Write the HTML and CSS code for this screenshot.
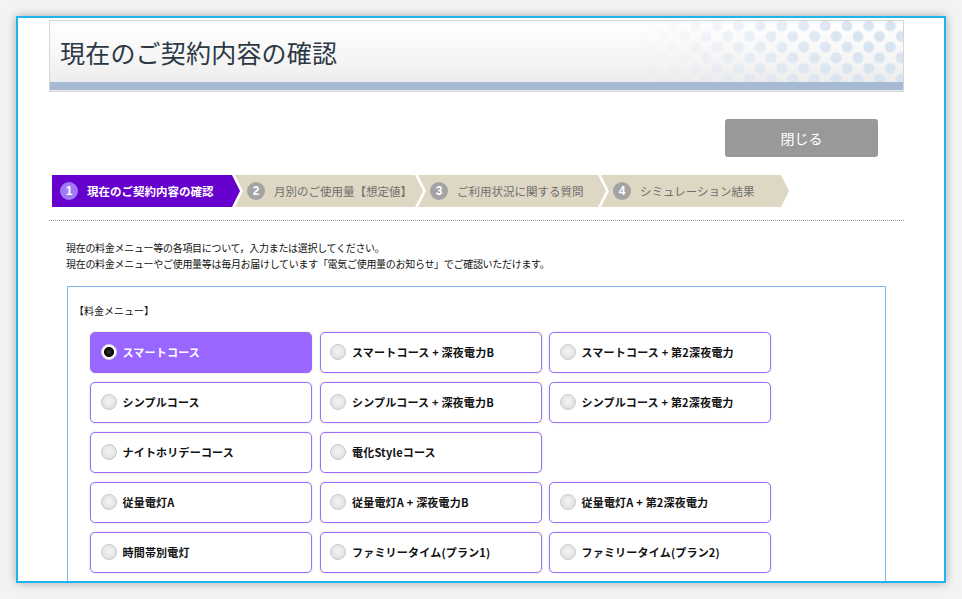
FILE: index.html
```html
<!DOCTYPE html>
<html lang="ja">
<head>
<meta charset="utf-8">
<title>現在のご契約内容の確認</title>
<link rel="stylesheet" href="styles.css">
</head>
<body>
<div class="window">
  <div class="page">
    <div class="header">
      <div class="header-top">
        <h1 class="title">現在のご契約内容の確認</h1>
        <div class="dots"></div>
      </div>
      <div class="header-bar"></div>
    </div>

    <div class="actions">
      <button class="close-btn" type="button">閉じる</button>
    </div>

    <ol class="steps">
      <li class="step step-first step-active"><span class="num">1</span><span class="step-label">現在のご契約内容の確認</span></li>
      <li class="step"><span class="num">2</span><span class="step-label">月別のご使用量【想定値】</span></li>
      <li class="step"><span class="num">3</span><span class="step-label">ご利用状況に関する質問</span></li>
      <li class="step"><span class="num">4</span><span class="step-label">シミュレーション結果</span></li>
    </ol>

    <div class="content">
      <p class="intro">現在の料金メニュー等の各項目について，入力または選択してください。<br>現在の料金メニューやご使用量等は毎月お届けしています「電気ご使用量のお知らせ」でご確認いただけます。</p>

      <div class="panel">
        <div class="panel-label">【料金メニュー】</div>
        <div class="options">
          <label class="option selected"><span class="radio"></span><span class="opt-text">スマートコース</span></label>
          <label class="option"><span class="radio"></span><span class="opt-text">スマートコース + 深夜電力B</span></label>
          <label class="option"><span class="radio"></span><span class="opt-text">スマートコース + 第2深夜電力</span></label>

          <label class="option"><span class="radio"></span><span class="opt-text">シンプルコース</span></label>
          <label class="option"><span class="radio"></span><span class="opt-text">シンプルコース + 深夜電力B</span></label>
          <label class="option"><span class="radio"></span><span class="opt-text">シンプルコース + 第2深夜電力</span></label>

          <label class="option"><span class="radio"></span><span class="opt-text">ナイトホリデーコース</span></label>
          <label class="option"><span class="radio"></span><span class="opt-text">電化Styleコース</span></label>
          <div class="option-empty"></div>

          <label class="option"><span class="radio"></span><span class="opt-text">従量電灯A</span></label>
          <label class="option"><span class="radio"></span><span class="opt-text">従量電灯A + 深夜電力B</span></label>
          <label class="option"><span class="radio"></span><span class="opt-text">従量電灯A + 第2深夜電力</span></label>

          <label class="option"><span class="radio"></span><span class="opt-text">時間帯別電灯</span></label>
          <label class="option"><span class="radio"></span><span class="opt-text">ファミリータイム(プラン1)</span></label>
          <label class="option"><span class="radio"></span><span class="opt-text">ファミリータイム(プラン2)</span></label>
        </div>
      </div>
    </div>
  </div>
</div>
</body>
</html>
```

FILE: styles.css
```css
* { box-sizing: border-box; }

html, body {
  margin: 0;
  padding: 0;
}

body {
  background: #f3f3f3;
  font-family: "Noto Sans CJK JP", "Noto Sans", sans-serif;
  color: #222;
  width: 962px;
  height: 599px;
  overflow: hidden;
}

.window {
  margin: 16px 0 0 16px;
  width: 930px;
  height: 567px;
  border: 2px solid #1db4ef;
  background: #fff;
  overflow: hidden;
  box-shadow: 0 0 9px rgba(0, 0, 0, 0.3);
}

.page {
  margin: 2px 0 0 31px;
  width: 855px;
}

/* Header */
.header {
  height: 72px;
  border: 1px solid #d6d6d6;
  background: linear-gradient(to bottom, #ffffff 0%, #f4f4f4 60%, #e9e9e9 100%);
  display: flex;
  flex-direction: column;
}

.header-top {
  height: 61px;
  display: flex;
  align-items: center;
}

.title {
  flex: 1;
  margin: 2px 0 0 0;
  padding: 0 0 0 10px;
  font-weight: 400;
  font-size: 25px;
  letter-spacing: 0.2px;
  color: #2c3844;
  line-height: 1;
}

.dots {
  width: 262px;
  height: 61px;
  background:
    radial-gradient(circle at 50% 50%, #d9e4f1 5px, rgba(217,228,241,0) 5.8px) 0 -6px / 21.7px 21.4px,
    radial-gradient(circle at 50% 50%, #d9e4f1 5px, rgba(217,228,241,0) 5.8px) 10.85px 4.7px / 21.7px 21.4px;
  -webkit-mask-image: linear-gradient(to right, rgba(0,0,0,0) 0%, rgba(0,0,0,0.35) 30%, rgba(0,0,0,0.8) 60%, #000 85%);
  mask-image: linear-gradient(to right, rgba(0,0,0,0) 0%, rgba(0,0,0,0.35) 30%, rgba(0,0,0,0.8) 60%, #000 85%);
}

.header-bar {
  height: 8px;
  background: #a6bad4;
}

/* Close button */
.actions {
  display: flex;
  justify-content: flex-end;
  padding-right: 26px;
  margin-top: 27px;
}

.close-btn {
  width: 153px;
  height: 38px;
  border: none;
  border-radius: 3px;
  background: #999999;
  color: #fff;
  font-family: "Noto Sans CJK JP", sans-serif;
  font-size: 14px;
  padding: 0;
}

/* Steps */
.steps {
  list-style: none;
  margin: 18px 0 0 3px;
  padding: 0;
  display: flex;
  height: 32px;
}

.step {
  width: 188px;
  height: 32px;
  background: #ddd7c3;
  display: flex;
  align-items: center;
  gap: 9px;
  padding-left: 12px;
  margin-left: -5px;
  clip-path: polygon(0 0, 180px 0, 188px 50%, 180px 100%, 0 100%, 8px 50%);
  color: #6f6f6f;
  font-size: 11.5px;
}

.step-first {
  margin-left: 0;
  padding-left: 8px;
  clip-path: polygon(0 0, 180px 0, 188px 50%, 180px 100%, 0 100%);
}

.step-active {
  background: #6600cc;
  color: #fff;
  font-weight: 700;
}

.num {
  width: 18px;
  height: 18px;
  border-radius: 50%;
  background: #a3a3a3;
  color: #fff;
  font-family: "Liberation Sans", sans-serif;
  font-weight: 700;
  font-size: 12px;
  display: flex;
  align-items: center;
  justify-content: center;
  flex: none;
}

.step-active .num {
  background: #a07af4;
}

.step-label {
  white-space: nowrap;
}

/* Content */
.content {
  margin-top: 13px;
  border-top: 1px dotted #9a9a9a;
  padding: 19px 0 0 0;
}

.intro {
  margin: 0 0 0 17px;
  font-size: 10px;
  line-height: 16px;
  letter-spacing: -0.3px;
  color: #111;
}

.panel {
  margin: 14px 0 0 18px;
  width: 819px;
  border: 1px solid #7db7ec;
  padding: 16px 0 40px 0;
}

.panel-label {
  font-size: 10px;
  line-height: 16px;
  padding-left: 6px;
  color: #111;
}

.options {
  margin-top: 13px;
  padding-left: 22px;
  display: grid;
  grid-template-columns: repeat(3, 222px);
  column-gap: 7.5px;
  row-gap: 9px;
}

.option {
  height: 41px;
  border: 1.5px solid #9d6dfd;
  border-radius: 5px;
  background: #fff;
  box-shadow: 0 0 2px rgba(0, 0, 0, 0.18);
  display: flex;
  align-items: center;
  padding-left: 9.5px;
  padding-bottom: 1px;
  gap: 6px;
  font-size: 11px;
  font-weight: 700;
  color: #111;
  white-space: nowrap;
}

.option.selected {
  background: #9966ff;
  border-color: #9966ff;
  color: #fff;
}

.radio {
  width: 16px;
  height: 16px;
  border-radius: 50%;
  flex: none;
  border: 1px solid #c9c9c9;
  background: radial-gradient(circle at 50% 45%, #f5f5f5 0%, #e6e6e6 55%, #d6d6d6 100%);
}

.selected .radio {
  border: 1px solid #d8d8d8;
  background: radial-gradient(circle at 50% 50%, #333 0, #000 4.5px, #fff 5.5px, #fff 7px);
}

.opt-text {
  letter-spacing: 0.2px;
}
```
